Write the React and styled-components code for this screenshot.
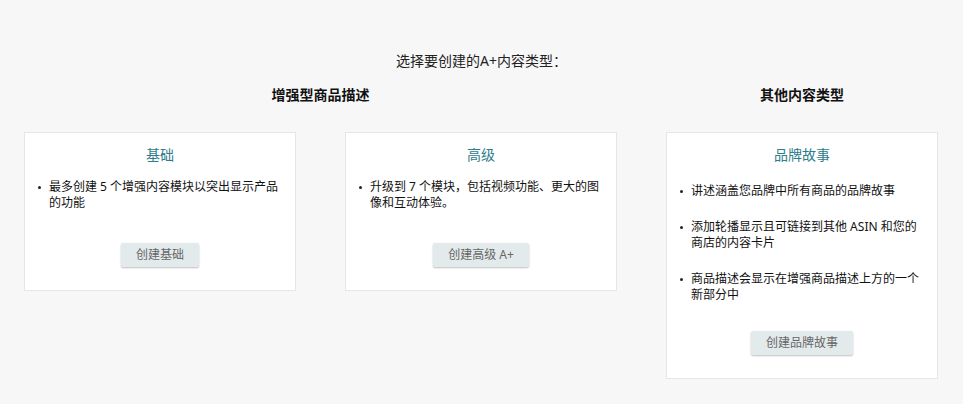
import React from 'react'
import styled, { createGlobalStyle } from 'styled-components'

const GlobalStyle = createGlobalStyle`
  html, body {
    margin: 0;
    padding: 0;
    background: #f7f7f7;
    font-family: "Noto Sans", "Noto Sans CJK SC", sans-serif;
    color: #111;
  }
`

const cards = {
  enhanced: [
    {
      title: '基础',
      items: ['最多创建 5 个增强内容模块以突出显示产品的功能'],
      button: '创建基础',
    },
    {
      title: '高级',
      items: ['升级到 7 个模块，包括视频功能、更大的图像和互动体验。'],
      button: '创建高级 A+',
    },
  ],
  other: [
    {
      title: '品牌故事',
      items: [
        '讲述涵盖您品牌中所有商品的品牌故事',
        '添加轮播显示且可链接到其他 ASIN 和您的商店的内容卡片',
        '商品描述会显示在增强商品描述上方的一个新部分中',
      ],
      button: '创建品牌故事',
      spaced: true,
    },
  ],
}

function Card({ title, items, button, spaced }) {
  return (
    <CardBox>
      <CardTitle>{title}</CardTitle>
      <List spaced={spaced}>
        {items.map((t) => (
          <li key={t}>{t}</li>
        ))}
      </List>
      <Button>{button}</Button>
    </CardBox>
  )
}

export default function App() {
  return (
    <Page>
      <GlobalStyle />
      <Prompt>选择要创建的A+内容类型：</Prompt>
      <Columns>
        <Group>
          <GroupTitle>增强型商品描述</GroupTitle>
          <CardRow>
            {cards.enhanced.map((c) => (
              <Card key={c.title} {...c} />
            ))}
          </CardRow>
        </Group>
        <Group>
          <GroupTitle>其他内容类型</GroupTitle>
          <CardRow>
            {cards.other.map((c) => (
              <Card key={c.title} {...c} />
            ))}
          </CardRow>
        </Group>
      </Columns>
    </Page>
  )
}

const Page = styled.div`
  padding: 51px 24px 0 24px;
  min-height: 404px;
  box-sizing: border-box;
`

const Prompt = styled.div`
  text-align: center;
  font-size: 14px;
  line-height: 19px;
  color: #222;
`

const Columns = styled.div`
  display: grid;
  grid-template-columns: 593px 272px;
  column-gap: 49px;
  margin-top: 15px;
`

const Group = styled.div`
  display: flex;
  flex-direction: column;
`

const GroupTitle = styled.div`
  text-align: center;
  font-size: 14px;
  line-height: 20px;
  font-weight: 700;
  color: #111;
  margin-bottom: 27px;
`

const CardRow = styled.div`
  display: flex;
  gap: 49px;
  align-items: flex-start;
`

const CardBox = styled.div`
  width: 272px;
  box-sizing: border-box;
  background: #fff;
  border: 1px solid #e6e6e6;
  padding: 12px 15px 23px 15px;
  display: flex;
  flex-direction: column;
  align-items: center;
`

const CardTitle = styled.div`
  font-size: 14px;
  line-height: 20px;
  color: #2d7d8b;
  margin-bottom: 14px;
`

const List = styled.ul`
  align-self: stretch;
  margin: 0 0 ${(p) => (p.spaced ? '24px' : '32px')} 0;
  padding: 0 0 0 9px;
  list-style: none;

  li {
    position: relative;
    font-size: 12px;
    line-height: 16px;
    color: #111;
    padding: ${(p) => (p.spaced ? '4px 0' : '0')};
    margin-bottom: ${(p) => (p.spaced ? '12px' : '0')};
  }

  li:last-child {
    margin-bottom: 0;
  }

  li::before {
    content: '';
    position: absolute;
    left: -11px;
    top: ${(p) => (p.spaced ? '11px' : '7px')};
    width: 3px;
    height: 3px;
    border-radius: 50%;
    background: #222;
  }
`

const Button = styled.div`
  height: 24px;
  line-height: 24px;
  padding: 0 15px;
  background: #e3eaeb;
  color: #666;
  font-size: 12px;
  border-radius: 2px;
  box-shadow: 0 1px 2px rgba(0, 0, 0, 0.25);
  white-space: nowrap;
`
